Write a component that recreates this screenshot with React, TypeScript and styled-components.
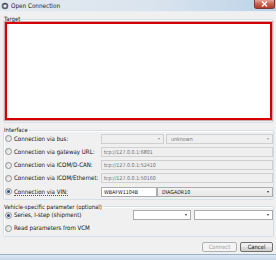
import React from 'react'
import styled, { createGlobalStyle } from 'styled-components'

const Global = createGlobalStyle`
  html, body { margin: 0; padding: 0; background: #f0f0f0; }
  * { box-sizing: border-box; }
`

const Window = styled.div`
  width: 276px;
  height: 260px;
  overflow: hidden;
  display: flex;
  flex-direction: column;
  background: #f0f0f0;
  font-family: "DejaVu Sans Condensed", "Liberation Sans", Arial, sans-serif;
  font-size: 6.1px;
  color: #111;
`

const TitleBar = styled.div`
  height: 12px;
  flex: none;
  display: flex;
  align-items: center;
  gap: 2px;
  padding-left: 1px;
  background: linear-gradient(90deg, #e3e9f0 0%, #dae4ee 55%, #bcd2e8 100%);
  border-bottom: 1px solid #e8eef4;
`

const TitleText = styled.span`
  flex: 1;
  font-size: 6.3px;
  color: #1a1a1a;
`

const CloseButton = styled.div`
  width: 21px;
  height: 9px;
  align-self: flex-start;
  margin-right: 1px;
  border: 1px solid #7a3b35;
  border-top: none;
  border-radius: 0 0 3px 3px;
  background: linear-gradient(180deg, #e3a497 0%, #c8614f 50%, #b13c2a 100%);
  display: flex;
  align-items: center;
  justify-content: center;
`

const Body = styled.div`
  flex: 1;
  display: flex;
  flex-direction: column;
  padding: 4px 2px 0 3px;
`

const Group = styled.fieldset`
  margin: 0;
  padding: 0 0 2px 1px;
  border: 1px solid #d5dfe5;
  box-shadow: inset 1px 1px 0 #fff;
  border-radius: 2px;
  min-width: 0;
  & + & { margin-top: 4px; }
`

const Legend = styled.legend`
  padding: 0 1px 0 0;
  margin-left: -1px;
  line-height: 6px;
  font-size: 5.9px;
  color: #111;
`

const TargetBox = styled.div`
  height: 98px;
  margin: 0 1px 0 0;
  background: #fff;
  border: 2px solid #d40000;
  box-shadow: 0 0 0 1px #c9a9a9;
`

const Rows = styled.div<{ $cols: string; $bottom?: number }>`
  display: grid;
  grid-template-columns: ${p => p.$cols};
  grid-auto-rows: 10px;
  row-gap: 3.25px;
  padding-top: 0.5px;
  padding-bottom: ${p => p.$bottom ?? 0}px;
  align-items: center;
`

const RadioLabel = styled.label<{ $focus?: boolean }>`
  display: flex;
  align-items: center;
  gap: 2px;
  white-space: nowrap;
  & > span:last-child {
    line-height: 7px;
    border-bottom: ${p => (p.$focus ? '1px dotted #555' : '1px solid transparent')};
  }
`

const RadioCircle = styled.span`
  width: 7px;
  height: 7px;
  flex: none;
  display: flex;
  align-items: center;
  justify-content: center;
  border-radius: 50%;
  border: 1px solid #929292;
  background: linear-gradient(135deg, #d9d9d9, #f7f7f7);
`

const RadioDot = styled.span`
  width: 3px;
  height: 3px;
  border-radius: 50%;
  background: #1d4f91;
`

const Fields = styled.div<{ $cols: string }>`
  display: grid;
  grid-template-columns: ${p => p.$cols};
  height: 10px;
`

const TextBox = styled.div<{ $disabled?: boolean }>`
  height: 10px;
  display: flex;
  align-items: center;
  padding-left: 2px;
  border: 1px solid ${p => (p.$disabled ? '#d0d0d0' : '#abadb3')};
  background: ${p => (p.$disabled ? '#efefef' : '#fff')};
  color: ${p => (p.$disabled ? '#6d6d6d' : '#111')};
  font-size: 5.3px;
  white-space: nowrap;
  overflow: hidden;
`

const Combo = styled.div<{ $disabled?: boolean; $shaded?: boolean }>`
  height: 10px;
  display: flex;
  align-items: center;
  padding-left: 4px;
  border: 1px solid ${p => (p.$disabled ? '#d0d0d0' : '#acacac')};
  background: ${p =>
    p.$disabled ? '#efefef' : p.$shaded ? 'linear-gradient(180deg,#f2f2f2,#e7e7e7)' : '#fff'};
  color: ${p => (p.$disabled ? '#7a7a7a' : '#111')};
  font-size: 5.3px;
  white-space: nowrap;
  & > span { flex: 1; overflow: hidden; }
`

const Arrow = styled.i<{ $disabled?: boolean }>`
  width: 0;
  height: 0;
  margin-right: 3px;
  border-left: 1.5px solid transparent;
  border-right: 1.5px solid transparent;
  border-top: 2px solid ${p => (p.$disabled ? '#9a9a9a' : '#333')};
`

const Footer = styled.div`
  display: flex;
  justify-content: flex-end;
  gap: 3px;
  margin-top: 5px;
  padding-right: 1px;
`

const Button = styled.div<{ $disabled?: boolean }>`
  height: 10px;
  width: ${p => (p.$disabled ? '35px' : '33px')};
  display: flex;
  align-items: center;
  justify-content: center;
  border: 1px solid ${p => (p.$disabled ? '#adb2b5' : '#707070')};
  border-radius: 2px;
  background: ${p =>
    p.$disabled ? '#f4f4f4' : 'linear-gradient(180deg,#f2f2f2 0%,#ebebeb 50%,#dddddd 51%,#cfcfcf 100%)'};
  color: ${p => (p.$disabled ? '#a0a0a0' : '#111')};
  font-size: 5.8px;
`

const Taskbar = styled.div`
  height: 6px;
  flex: none;
  border-top: 1px solid #9fb2c8;
  background: linear-gradient(180deg, #dce7f3, #c6d7ea);
`

const Radio = ({ label, checked, focus }: { label: string; checked?: boolean; focus?: boolean }) => (
  <RadioLabel $focus={focus}>
    <RadioCircle>{checked && <RadioDot />}</RadioCircle>
    <span>{label}</span>
  </RadioLabel>
)

const DropDown = ({ value, disabled, shaded }: { value?: string; disabled?: boolean; shaded?: boolean }) => (
  <Combo $disabled={disabled} $shaded={shaded}>
    <span>{value}</span>
    <Arrow $disabled={disabled} />
  </Combo>
)

const AppIcon = () => (
  <svg width="8" height="8" viewBox="0 0 8 8">
    <circle cx="4" cy="4" r="3.3" fill="#5a6470" />
    <circle cx="4" cy="4" r="1.6" fill="#e8ecf0" />
    <path d="M4 0.7 L5 2 L3 2 Z" fill="#2e3338" />
  </svg>
)

export default function App() {
  return (
    <Window>
      <Global />
      <TitleBar>
        <AppIcon />
        <TitleText>Open Connection</TitleText>
        <CloseButton>
          <svg width="7" height="6" viewBox="0 0 7 6">
            <path d="M1 0.5 L6 5.5 M6 0.5 L1 5.5" stroke="#fff" strokeWidth="1.4" />
          </svg>
        </CloseButton>
      </TitleBar>
      <Body>
        <Group>
          <Legend>Target</Legend>
          <TargetBox />
        </Group>
        <Group>
          <Legend>Interface</Legend>
          <Rows $cols="96px 1fr">
            <Radio label="Connection via bus:" />
            <Fields $cols="63px 2px 1fr">
              <DropDown disabled />
              <div />
              <DropDown value="unknown" disabled />
            </Fields>
            <Radio label="Connection via gateway URL:" />
            <TextBox $disabled>tcp://127.0.0.1:6801</TextBox>
            <Radio label="Connection via ICOM/D-CAN:" />
            <TextBox $disabled>tcp://127.0.0.1:52410</TextBox>
            <Radio label="Connection via ICOM/Ethernet:" />
            <TextBox $disabled>tcp://127.0.0.1:50160</TextBox>
            <Radio label="Connection via VIN:" checked focus />
            <Fields $cols="56px 1fr">
              <TextBox>WBAFW1104B</TextBox>
              <DropDown value="DIAGADR10" shaded />
            </Fields>
          </Rows>
        </Group>
        <Group>
          <Legend>Vehicle-specific parameter (optional)</Legend>
          <Rows $cols="128px 1fr" $bottom={1}>
            <Radio label="Series, I-step (shipment)" checked />
            <Fields $cols="58px 3px 1fr">
              <DropDown />
              <div />
              <DropDown />
            </Fields>
            <Radio label="Read parameters from VCM" />
            <div />
          </Rows>
        </Group>
        <Footer>
          <Button $disabled>Connect</Button>
          <Button>Cancel</Button>
        </Footer>
      </Body>
      <Taskbar />
    </Window>
  )
}
